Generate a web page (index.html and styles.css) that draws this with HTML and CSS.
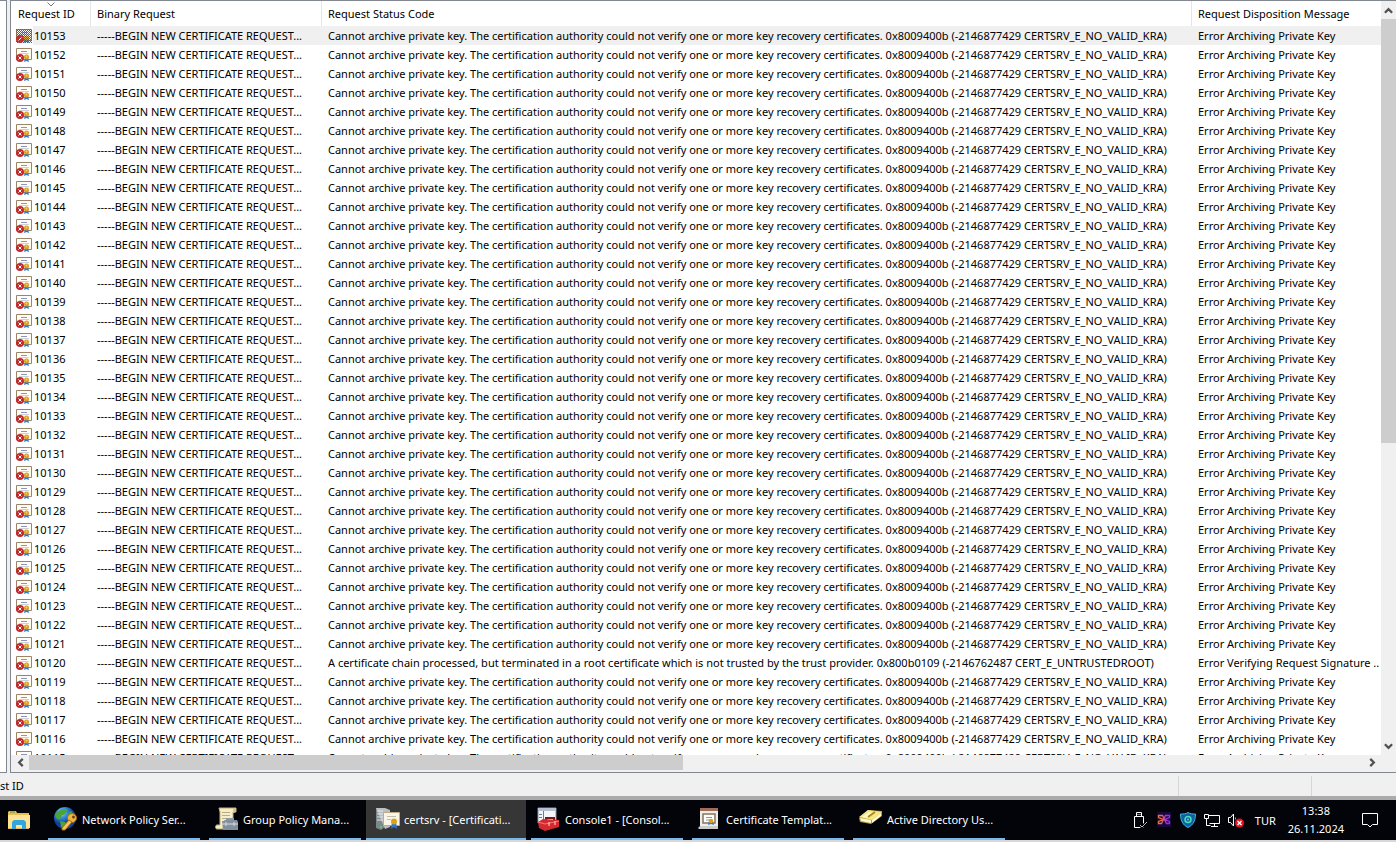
FILE: index.html
```
<!DOCTYPE html>
<html lang="en">
  <head>
    <meta charset="UTF-8" />
    <meta name="viewport" content="width=device-width, initial-scale=1.0" />
    <title>certsrv - [Certification Authority]</title>
    <link rel="stylesheet" href="styles.css" />
  </head>
  <body>
    <!-- shared icons -->
    <svg class="sprite" aria-hidden="true">
      <defs>
        <pattern id="dither" width="2" height="2" patternUnits="userSpaceOnUse">
          <path d="M0 0h1v1H0zM1 1h1v1H1z" fill="#0078d7" />
        </pattern>
        <linearGradient id="xgrad">
          <stop offset="0.2" stop-color="#f0703a" />
          <stop offset="0.8" stop-color="#9a2be8" />
        </linearGradient>
        <radialGradient id="ocean" cx="0.35" cy="0.25">
          <stop offset="0" stop-color="#d5f1ff" />
          <stop offset="0.4" stop-color="#3b9be0" />
          <stop offset="1" stop-color="#123f9c" />
        </radialGradient>
      </defs>
      <symbol id="cert-failed" viewBox="0 0 16 14">
        <path d="M.5.5h15v11H.5z" fill="#fffdf6" stroke="#9c8468" />
        <path d="M5 3.500h6" stroke="#8d95bd" />
        <path d="M3 5.500h10" stroke="#d0d0d8" />
        <path d="M9 10l-1 4 2.500-1 2.500 1-1-4z" fill="#2f76d2" />
        <circle cx="10.500" cy="9" r="2.500" fill="#dc9c1c" />
        <circle cx="10.500" cy="8.500" r="1" fill="#f6cf66" />
        <circle cx="4" cy="10" r="4" fill="#bf2a2c" />
        <path d="M2.500 8.500l3 3m0-3l-3 3" stroke="#fff" />
      </symbol>
    </svg>

    <main class="console">
      <div class="tree-pane"></div>
      <section class="list-pane">
        <div class="list-view">
          <table>
            <colgroup>
              <col class="col-id" />
              <col class="col-binary" />
              <col class="col-status" />
              <col />
            </colgroup>
            <thead>
              <tr>
                <th>
                  Request ID
                  <svg class="sort" viewBox="0 0 8 5"><path d="M.5.5L4 4 7.500.5" /></svg>
                </th>
                <th>Binary Request</th>
                <th>Request Status Code</th>
                <th>Request Disposition Message</th>
              </tr>
            </thead>
            <tbody id="requests"></tbody>
          </table>
        </div>
        <div class="vscroll">
          <button aria-label="Scroll up"><svg viewBox="0 0 8 6"><path d="M.8 5L4 1.800 7.200 5" /></svg></button>
          <div class="track"><div class="thumb"></div></div>
          <button aria-label="Scroll down"><svg viewBox="0 0 8 6"><path d="M.8 1L4 4.200 7.200 1" /></svg></button>
        </div>
        <div class="hscroll">
          <button aria-label="Scroll left"><svg viewBox="0 0 8 8"><path d="M6 .8L2.800 4 6 7.200" /></svg></button>
          <div class="track"><div class="thumb"></div></div>
          <button aria-label="Scroll right"><svg viewBox="0 0 8 8"><path d="M2 .8L5.200 4 2 7.200" /></svg></button>
        </div>
      </section>
    </main>

    <footer class="status-bar">
      <span class="status-text">st ID</span>
      <span class="status-cell"></span>
      <span class="status-cell last"></span>
    </footer>

    <nav class="taskbar">
      <button class="explorer" aria-label="File Explorer">
        <svg viewBox="0 0 22 20">
          <path d="M0 2l1-1h7l1 2h12v16H0z" fill="#e9bd50" />
          <path d="M0 5h22v13H0z" fill="#ffe394" />
          <path d="M2 2h5" stroke="#4e9e5b" />
          <path d="M4 19v-7l2-2h10l2 2v7h-4v-4H8v4z" fill="#35a5dd" />
        </svg>
      </button>
      <button class="task">
        <svg viewBox="0 0 24 24">
          <circle cx="11" cy="11" r="11" fill="url(#ocean)" />
          <path d="M3 5l5-3 5 1-2 4-4 2-1 4-4-2-1-3zM13 8l4-4 3 3 1 5-4 1-4-2zM6 14l5 1 2 3-3 4-3-2z" fill="#4da336" />
          <circle cx="18" cy="11" r="4.500" fill="#f0b443" stroke="#a46716" />
          <path d="M15 13L8 21v2h3l7-8z" fill="#f6c55b" stroke="#a46716" />
          <circle cx="19.500" cy="10" r="1.500" fill="#69451b" />
        </svg>
        <span>Network Policy Ser...</span>
      </button>
      <button class="task">
        <svg viewBox="0 0 24 24">
          <path d="M4 1h17v4h-3v17H2c-2 0-2-4 0-4h3V5z" fill="#f6edc9" stroke="#c1ad74" />
          <path d="M18 1c4 0 4 5 0 5" fill="#d8c38c" />
          <path d="M7 5.500h8M7 8.500h8M7 11.500h8M7 14.500h4" stroke="#b6ac8b" />
          <path d="M12 14v-2h6v2" fill="none" stroke="#8c9aa7" stroke-width="2" />
          <path d="M7 15l3-2h12l1 2v8H8z" fill="#82909e" />
          <path d="M7 17h16M11 15v4m8-4v4" stroke="#d5dde3" />
        </svg>
        <span>Group Policy Mana...</span>
      </button>
      <button class="task active">
        <svg viewBox="0 0 24 24">
          <path d="M0 1h9v19l-4 3-5-2z" fill="#7e878b" />
          <path d="M0 1h9l5 2v17l-5 2z" fill="#b9bfc2" />
          <path d="M1 4h6M1 7h6M1 10h6M1 13h6" stroke="#e2e7e9" />
          <circle cx="5" cy="20" r="1" fill="#53e047" />
          <path d="M7.500 5.500h16v13h-16z" fill="#fbf5e8" stroke="#c2a98a" />
          <path d="M11 9.500h9M11 12.500h4" stroke="#c2bbb0" />
          <path d="M16 15l-1 7 3-2 3 2-1-7z" fill="#2f76d2" />
          <circle cx="18" cy="14.500" r="3" fill="#dda019" />
        </svg>
        <span>certsrv - [Certificati...</span>
      </button>
      <button class="task">
        <svg viewBox="0 0 24 24">
          <path d="M1 1h18v15H1z" fill="#f4f5f8" stroke="#8993a3" />
          <path d="M1 2.500h18" stroke="#b5c0d3" stroke-width="3" />
          <path d="M6.500 4v10M2 7.500h3M2 10.500h3" stroke="#707987" />
          <path d="M9 14v-3h8v3" fill="none" stroke="#7d1518" stroke-width="2" />
          <path d="M1 15l5-3 16 1v7l-14 4-6-3z" fill="#d6292f" />
          <path d="M1 15l7 2 14-3" fill="none" stroke="#f27b79" />
          <path d="M12 15v4m6-5v4" stroke="#f6d8d8" />
        </svg>
        <span>Console1 - [Consol...</span>
      </button>
      <button class="task">
        <svg viewBox="0 0 24 24">
          <path d="M2 1h18v20H2z" fill="#ededed" />
          <path d="M2 1h18v3H2z" fill="#a06b58" />
          <path d="M0 21l2-2h18v3H1z" fill="#cacaca" />
          <path d="M5 7h12v9H5z" fill="#fff" stroke="#8f7354" stroke-width="1.500" />
          <path d="M8 10.500h6M8 13h4" stroke="#8c95b8" />
          <path d="M11 14l-1 4 3-1 3 1-1-4z" fill="#2f76d2" />
          <circle cx="13" cy="14" r="2.300" fill="#dda019" />
        </svg>
        <span>Certificate Templat...</span>
      </button>
      <button class="task">
        <svg viewBox="0 0 24 24">
          <path d="M0 11L9 3l14 1v5L12 17 1 15z" fill="#b39a3c" />
          <path d="M0 10L9 3l14 2-10 8z" fill="#f7e784" />
          <path d="M1 11l11 2v3L2 14zM13 13l9-7v3l-9 7z" fill="#fff9cf" />
          <path d="M3 10l7-5 4 1-6 5" fill="#fffac9" />
          <path d="M9 10l7-5" stroke="#ac8819" stroke-width="2" />
        </svg>
        <span>Active Directory Us...</span>
      </button>

      <div class="tray">
        <svg class="tray-icon" viewBox="0 0 16 16">
          <path d="M4.500.5h5v4h-5zM2.500 4.500h9v11h-9z" fill="none" stroke="#fff" />
          <path d="M6 2v1M8 2v1" stroke="#fff" />
          <path d="M8 13l2 2 5-5" fill="none" stroke="#000" stroke-width="3" />
          <path d="M8 13l2 2 5-5" fill="none" stroke="#bbb" />
        </svg>
        <svg class="tray-icon" viewBox="0 0 16 16">
          <path d="M1 0h14v15H1z" fill="#16083f" />
          <path d="M2.500 3.500h4l4 8h3v-2l-5-2 5-2v-2h-4l-4 8h-3v-2l5-2-5-2z" fill="none" stroke="url(#xgrad)" stroke-width="1.300" />
        </svg>
        <svg class="tray-icon" viewBox="0 0 16 16">
          <path d="M8 .5c2 1.500 5 1.500 7.500 1.500 0 6-2 11-7.500 13.500C2.500 13 .5 8 .5 2 3 2 6 2 8 .5z" fill="#145e9c" stroke="#34b8ee" />
          <circle cx="8" cy="7.500" r="3" fill="none" stroke="#48dfbc" stroke-width="1.500" />
          <circle cx="8" cy="7.500" r="1" fill="#48dfbc" />
        </svg>
        <svg class="tray-icon" viewBox="0 0 16 16">
          <path d="M4.500 3.500h11v8H5.500M10.500 11.500v3M7 14.500h7M.5 2.500h4v4h-4zM2.500 6.500v7h4" fill="none" stroke="#fff" />
        </svg>
        <svg class="tray-icon" viewBox="0 0 16 16">
          <path d="M.5 5.500h2l3-3.500v12l-3-3.500h-2z" fill="none" stroke="#fff" />
          <path d="M7.500 5.500v2" stroke="#aaa" />
          <circle cx="11.500" cy="11" r="4.500" fill="#e81123" />
          <path d="M9.500 9l4 4m0-4l-4 4" stroke="#fff" stroke-width="1.400" />
        </svg>
        <span class="lang">TUR</span>
        <time class="clock">13:38<br />26.11.2024</time>
        <button class="notify" aria-label="Notifications">
          <svg viewBox="0 0 16 16"><path d="M.5 1.500h15v11h-5L8 15l-2.500-2.500h-5z" /></svg>
        </button>
      </div>
    </nav>

    <script>
      const denied =
        "Cannot archive private key. The certification authority could not verify one or more key recovery certificates. 0x8009400b (-2146877429 CERTSRV_E_NO_VALID_KRA)";
      const untrusted =
        "A certificate chain processed, but terminated in a root certificate which is not trusted by the trust provider. 0x800b0109 (-2146762487 CERT_E_UNTRUSTEDROOT)";

      let rows = "";
      for (let id = 10153; id >= 10115; id--) {
        const first = id === 10153;
        const chain = id === 10120;
        rows += `
        <tr${first ? ' class="selected"' : ""}>
          <td><div class="request"><svg class="cert" viewBox="0 0 16 14"><use href="#cert-failed" />${
            first ? '<path d="M0 0h16v14H0z" fill="url(#dither)" />' : ""
          }</svg><span>${id}</span></div></td>
          <td>-----BEGIN NEW CERTIFICATE REQUEST...</td>
          <td>${chain ? untrusted : denied}</td>
          <td>${chain ? "Error Verifying Request Signature .." : "Error Archiving Private Key"}</td>
        </tr>`;
      }
      document.getElementById("requests").innerHTML = rows;
    </script>
  </body>
</html>
```
FILE: styles.css
```
* {
  box-sizing: border-box;
}

body {
  margin: 0;
  height: 100vh;
  display: flex;
  flex-direction: column;
  overflow: hidden;
  background: #f0f0f0;
  color: #000;
  font-family: "Noto Sans", "Open Sans", sans-serif;
  font-size: 11px;
  line-height: 19px;
}

button {
  border: 0;
  padding: 0;
  background: none;
  color: inherit;
  font: inherit;
}

svg {
  display: block;
  flex: none;
}

.sprite {
  position: absolute;
  width: 0;
  height: 0;
}

/* console window */
.console {
  flex: 1;
  min-height: 0;
  display: flex;
  gap: 3px;
}

.tree-pane {
  width: 7px;
  background: #fff;
  border: solid #828790;
  border-width: 1px 1px 1px 0;
}

.list-pane {
  flex: 1;
  min-width: 0;
  display: grid;
  grid-template-columns: 1fr 15px;
  grid-template-rows: 1fr 17px;
  border: solid #828790;
  border-width: 1px 0 1px 1px;
  background: #f0f0f0;
}

.list-view {
  min-width: 0;
  min-height: 0;
  overflow: hidden;
  background: #fff;
}

table {
  width: 100%;
  table-layout: fixed;
  border-collapse: separate;
  border-spacing: 0;
}

.col-id {
  width: 80px;
}

.col-binary {
  width: 231px;
}

.col-status {
  width: 870px;
}

th,
td {
  padding: 0 0 0 6px;
  overflow: hidden;
  white-space: nowrap;
  text-align: left;
  font-weight: normal;
}

th {
  position: relative;
  height: 25px;
}

th:first-child {
  padding-left: 7px;
}

th:not(:last-child) {
  border-right: 1px solid #e5e5e5;
}

td {
  height: 19px;
}

.sort {
  position: absolute;
  top: 1px;
  left: 36px;
  width: 8px;
  height: 5px;
  fill: none;
  stroke: #777;
}

.selected td {
  background: #f0f0f0;
}

.selected td:first-child {
  background: linear-gradient(to right, #fff 22px, #f0f0f0 22px);
}

.request {
  display: flex;
  align-items: center;
  gap: 2px;
  margin-left: -1px;
}

.cert {
  width: 16px;
  height: 14px;
}

/* scroll bars */
.vscroll,
.hscroll {
  display: flex;
}

.vscroll {
  flex-direction: column;
}

.hscroll {
  grid-column: 1;
  height: 15px;
}

.vscroll button,
.hscroll button {
  display: flex;
  align-items: center;
  justify-content: center;
  width: 18px;
  height: 15px;
}

.vscroll button {
  width: 15px;
  height: 18px;
}

.vscroll svg,
.hscroll svg {
  width: 9px;
  height: 9px;
  fill: none;
  stroke: #505050;
  stroke-width: 2;
}

.track {
  flex: 1;
}

.thumb {
  background: #cdcdcd;
}

.vscroll .thumb {
  height: 59%;
}

.hscroll .thumb {
  width: 49%;
  height: 100%;
}

/* status bar */
.status-bar {
  display: flex;
  height: 27px;
  padding-top: 3px;
  border-bottom: 4px solid #ababab;
}

.status-text {
  flex: 1;
}

.status-cell {
  width: 133px;
  height: 20px;
  border-left: 1px solid #d7d7d7;
}

.status-cell.last {
  width: 85px;
}

/* taskbar */
.taskbar {
  display: flex;
  gap: 1px;
  height: 42px;
  background: #02040a;
  border-bottom: 2px solid #d8d8d8;
  color: #fff;
}

.explorer {
  width: 43px;
  padding-left: 8px;
}

.explorer svg {
  width: 22px;
  height: 20px;
}

.task {
  position: relative;
  display: flex;
  align-items: center;
  gap: 4px;
  width: 160px;
  padding: 0 0 2px 10px;
  white-space: nowrap;
}

.task::after {
  content: "";
  position: absolute;
  right: 4px;
  bottom: 0;
  left: 4px;
  height: 2px;
  background: #76b9ed;
}

.task.active {
  background: #363636;
}

.task.active::after {
  right: 0;
  left: 0;
}

.task svg {
  width: 24px;
  height: 24px;
}

.tray {
  display: flex;
  align-items: center;
  gap: 8px;
  margin-left: auto;
  padding-right: 18px;
}

.tray-icon,
.notify svg {
  width: 16px;
  height: 16px;
}

.lang {
  margin-left: 3px;
}

.clock {
  margin: 0 10px 0 4px;
  line-height: 18px;
  text-align: center;
}

.notify svg {
  fill: none;
  stroke: #fff;
}
```
